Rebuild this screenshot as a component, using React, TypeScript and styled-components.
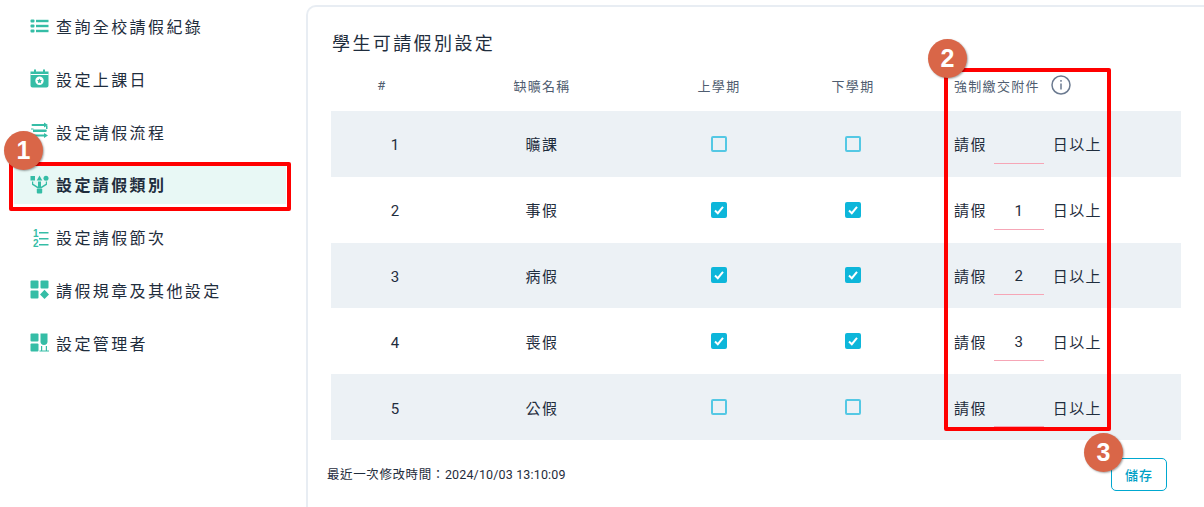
// Import Dependencies
import styled, { createGlobalStyle } from "styled-components";
import type { FunctionComponent, ReactNode } from "react";

const GlobalStyle = createGlobalStyle`
    html, body {
        margin: 0;
        padding: 0;
        background: #fff;
    }
    body {
        font-family: Roboto, "Noto Sans CJK TC", sans-serif;
        color: #1f2d3d;
    }
`;

// Define Layout
const Page = styled.div`
    position: relative;
    width: 1204px;
    height: 507px;
    overflow: hidden;
    display: flex;
`;
const Sidebar = styled.nav`
    width: 306px;
    flex: none;
    padding: 6px 20px 0 14px;
    box-sizing: border-box;
    display: flex;
    flex-direction: column;
    gap: 12.8px;
`;
const MenuItem = styled.div<{ $active?: boolean }>`
    height: 40px;
    display: flex;
    align-items: center;
    gap: 7px;
    padding-left: 16px;
    font-size: 16px;
    letter-spacing: 2.4px;
    color: #1f2d3d;
    font-weight: ${(p) => (p.$active ? 700 : 400)};
    background: ${(p) => (p.$active ? "#e8f8f5" : "transparent")};
`;
const MenuIcon = styled.svg`
    width: 19px;
    height: 19px;
    flex: none;
    fill: #35bda6;
`;
const Card = styled.main`
    flex: 1;
    margin-top: 5px;
    border: 2px solid #e8edf3;
    border-right: none;
    border-bottom: none;
    border-radius: 10px 0 0 0;
    padding: 24px 23px 0 18px;
    box-sizing: border-box;
    height: 520px;
`;
const Title = styled.h2`
    margin: 0 0 0 6px;
    font-size: 18px;
    line-height: 26px;
    letter-spacing: 2.4px;
    font-weight: 400;
    color: #1f2d3d;
`;
const Table = styled.div`
    margin: 6px 0 0 5px;
`;
const HeaderRow = styled.div`
    display: grid;
    grid-template-columns: 102px 218px 136px 132px 1fr;
    height: 48px;
    padding-bottom: 4px;
    box-sizing: border-box;
    align-items: center;
    justify-items: center;
    font-size: 13px;
    letter-spacing: 1.3px;
    color: #4f5d70;
`;
const BodyRow = styled.div<{ $shaded: boolean }>`
    display: grid;
    grid-template-columns: 128px 166px 188px 80px 1fr;
    height: 65.8px;
    align-items: center;
    justify-items: center;
    font-size: 15px;
    letter-spacing: 1.4px;
    color: #1f2d3d;
    background: ${(p) => (p.$shaded ? "#ecf1f5" : "#fff")};
`;
const RowNumber = styled.span`
    letter-spacing: 0;
    padding-top: 3px;
`;
const AttachHeader = styled.div`
    justify-self: start;
    margin-left: 35px;
    display: flex;
    align-items: center;
    gap: 11px;
`;
const InfoIcon = styled.svg`
    width: 20px;
    height: 20px;
    fill: none;
    stroke: #6b7a90;
`;
const Check = styled.span<{ $checked: boolean }>`
    width: 16px;
    height: 16px;
    box-sizing: border-box;
    border-radius: 2px;
    border: 2px solid ${(p) => (p.$checked ? "#0db6da" : "#54c8e4")};
    background: ${(p) => (p.$checked ? "#0db6da" : "transparent")};
    display: flex;
    align-items: center;
    justify-content: center;
`;
const AttachCell = styled.div`
    justify-self: start;
    margin-left: 61px;
    display: flex;
    align-items: center;
`;
const DayInput = styled.div`
    width: 50px;
    height: 40px;
    margin: 0 9px 0 7px;
    padding-top: 3px;
    box-sizing: border-box;
    display: flex;
    align-items: center;
    justify-content: center;
    border-bottom: 1px solid #f6a6b6;
    letter-spacing: 0;
`;
const Footer = styled.div`
    display: flex;
    justify-content: space-between;
    align-items: flex-start;
    margin: 18px 0 0 1px;
    padding-right: 14px;
`;
const UpdatedAt = styled.span`
    font-size: 12.5px;
    line-height: 16px;
    margin-top: 9px;
    letter-spacing: 0.15px;
    color: #1f2d3d;
`;
const UpdatedLabel = styled.span`
    letter-spacing: 0.6px;
`;
const SaveButton = styled.button`
    width: 56px;
    height: 33px;
    border: 1px solid #00a8d0;
    border-radius: 5px;
    background: #fff;
    color: #00a0c6;
    font-family: inherit;
    font-size: 13px;
    font-weight: 500;
    letter-spacing: 1px;
    padding: 0;
`;

// Annotation overlays on top of the screenshot
const Highlight = styled.div<{ $x: number; $y: number; $w: number; $h: number }>`
    position: absolute;
    left: ${(p) => p.$x}px;
    top: ${(p) => p.$y}px;
    width: ${(p) => p.$w}px;
    height: ${(p) => p.$h}px;
    box-sizing: border-box;
    border: 4px solid #ff0000;
    border-radius: 2px;
`;
const Badge = styled.div<{ $x: number; $y: number }>`
    position: absolute;
    left: ${(p) => p.$x}px;
    top: ${(p) => p.$y}px;
    width: 39px;
    height: 39px;
    border-radius: 50%;
    background: #d96648;
    box-shadow: 1px 1px 2px rgba(0, 0, 0, 0.35);
    color: #fff;
    font-family: "Liberation Sans", sans-serif;
    font-size: 25px;
    font-weight: 700;
    display: flex;
    align-items: center;
    justify-content: center;
`;

// Define Icons
const icons: Record<string, ReactNode> = {
    list: (
        <>
            <rect x="0.5" y="2.5" width="4" height="3" rx="1" />
            <rect x="0.5" y="7.5" width="4" height="3" rx="1" />
            <rect x="0.5" y="12.5" width="4" height="3" rx="1" />
            <rect x="6" y="2.8" width="12.5" height="2.4" />
            <rect x="6" y="7.8" width="12.5" height="2.4" />
            <rect x="6" y="12.8" width="12.5" height="2.4" />
        </>
    ),
    calendar: (
        <>
            <rect x="4" y="0.5" width="2" height="3" />
            <rect x="13" y="0.5" width="2" height="3" />
            <path
                fillRule="evenodd"
                d="M0.500 2.500h18v14a2 2 0 0 1-2 2h-14a2 2 0 0 1-2-2v-14Zm9 5a4.200 4.200 0 1 0 0 8.400 4.200 4.200 0 0 0 0-8.400Z"
            />
            <rect x="0.5" y="5" width="18" height="1" fill="#fff" />
            <path d="M9.500 9.500l.8 1.600 1.700.2-1.200 1.200.3 1.700-1.600-.8-1.600.8.3-1.700-1.200-1.200 1.700-.2Z" />
        </>
    ),
    flow: (
        <>
            <path d="M2 2h12V.5l4 2.500-4 2.500V4H2.500a1 1 0 0 1 0-2Z" />
            <path d="M3 7.500h12.500a1.300 1.300 0 0 1 0 2.600H3Z" />
            <path d="M2 12.500h12V11l4 2.500-4 2.500v-1.500H2.500a1 1 0 0 1 0-2Z" />
            <path d="M1 6.500h2.500v1H1ZM16 4h1.500v3H16Z" />
        </>
    ),
    tree: (
        <>
            <rect x="0.5" y="1" width="4.500" height="4.500" />
            <path d="M9.500 0.500l2.800 5h-5.600Z" />
            <circle cx="16" cy="3.200" r="2.500" />
            <path d="M2 6.500h1.200v2.300l4.800 3V6.500h3v5.300l4.800-3V6.500H17v3.200l-5.500 3.600h-4L2 9.700Z" />
            <rect x="6.800" y="13.500" width="5.400" height="5" rx="1" />
        </>
    ),
    ordered: (
        <>
            <text x="3" y="9" fontSize="10" fontWeight="700" fontFamily="Liberation Sans">1</text>
            <text x="3" y="18.500" fontSize="10" fontWeight="700" fontFamily="Liberation Sans">2</text>
            <rect x="9" y="4" width="9.500" height="1.500" />
            <rect x="9" y="10" width="9.500" height="1.500" />
            <rect x="9" y="16" width="9.500" height="1.500" />
        </>
    ),
    grid: (
        <>
            <rect x="0.5" y="0.5" width="8" height="8" rx="1" />
            <rect x="10.500" y="0.5" width="8" height="8" rx="1" />
            <rect x="0.5" y="10.500" width="8" height="8" rx="1" />
            <path d="M14.500 9.800l4.500 4.600-4.500 4.600-4.500-4.600Z" />
        </>
    ),
    admin: (
        <>
            <rect x="0.5" y="0.5" width="8" height="8" rx="1" />
            <rect x="0.5" y="10.500" width="8" height="8" rx="1" />
            <path d="M10.500 0.500h7v8a3.500 3.500 0 0 1-7 0Z" />
            <path d="M9.500 17.500h9.500v1H9.500ZM11 13h1.200v4.500H11ZM15.800 13H17v4.500h-1.200Z" />
        </>
    ),
};

const CheckMark = () => (
    <svg width="12" height="12" viewBox="0 0 12 12" fill="none">
        <path d="M2 6.500 4.800 9.200 10 2.800" stroke="#fff" strokeWidth="2" />
    </svg>
);

// Define Data
const menu = [
    { key: "list", label: "查詢全校請假紀錄" },
    { key: "calendar", label: "設定上課日" },
    { key: "flow", label: "設定請假流程" },
    { key: "tree", label: "設定請假類別", active: true },
    { key: "ordered", label: "設定請假節次" },
    { key: "grid", label: "請假規章及其他設定" },
    { key: "admin", label: "設定管理者" },
];
const rows = [
    { id: 1, name: "曠課", first: false, second: false, days: "" },
    { id: 2, name: "事假", first: true, second: true, days: "1" },
    { id: 3, name: "病假", first: true, second: true, days: "2" },
    { id: 4, name: "喪假", first: true, second: true, days: "3" },
    { id: 5, name: "公假", first: false, second: false, days: "" },
];

// Define Page
const App: FunctionComponent = () => (
    <Page>
        <GlobalStyle />
        <Sidebar>
            {menu.map((item) => (
                <MenuItem key={item.key} $active={item.active}>
                    <MenuIcon viewBox="0 0 19 19">{icons[item.key]}</MenuIcon>
                    {item.label}
                </MenuItem>
            ))}
        </Sidebar>
        <Card>
            <Title>學生可請假別設定</Title>
            <Table>
                <HeaderRow>
                    <span>#</span>
                    <span>缺曠名稱</span>
                    <span>上學期</span>
                    <span>下學期</span>
                    <AttachHeader>
                        強制繳交附件
                        <InfoIcon viewBox="0 0 20 20">
                            <circle cx="10" cy="10" r="9" strokeWidth="1.500" />
                            <path d="M10 8.500v6" strokeWidth="1.500" />
                            <path d="M10 5v1.800" strokeWidth="1.500" />
                        </InfoIcon>
                    </AttachHeader>
                </HeaderRow>
                {rows.map((row, index) => (
                    <BodyRow key={row.id} $shaded={index % 2 === 0}>
                        <RowNumber>{row.id}</RowNumber>
                        <span>{row.name}</span>
                        <Check $checked={row.first}>{row.first && <CheckMark />}</Check>
                        <Check $checked={row.second}>{row.second && <CheckMark />}</Check>
                        <AttachCell>
                            請假
                            <DayInput>{row.days}</DayInput>
                            日以上
                        </AttachCell>
                    </BodyRow>
                ))}
            </Table>
            <Footer>
                <UpdatedAt>
                    <UpdatedLabel>最近一次修改時間：</UpdatedLabel>2024/10/03 13:10:09
                </UpdatedAt>
                <SaveButton>儲存</SaveButton>
            </Footer>
        </Card>
        <Highlight $x={9} $y={162} $w={282} $h={49} />
        <Highlight $x={944} $y={68} $w={167} $h={363} />
        <Badge $x={4} $y={131}>1</Badge>
        <Badge $x={928} $y={39}>2</Badge>
        <Badge $x={1084} $y={433}>3</Badge>
    </Page>
);

// Export Page
export default App;
